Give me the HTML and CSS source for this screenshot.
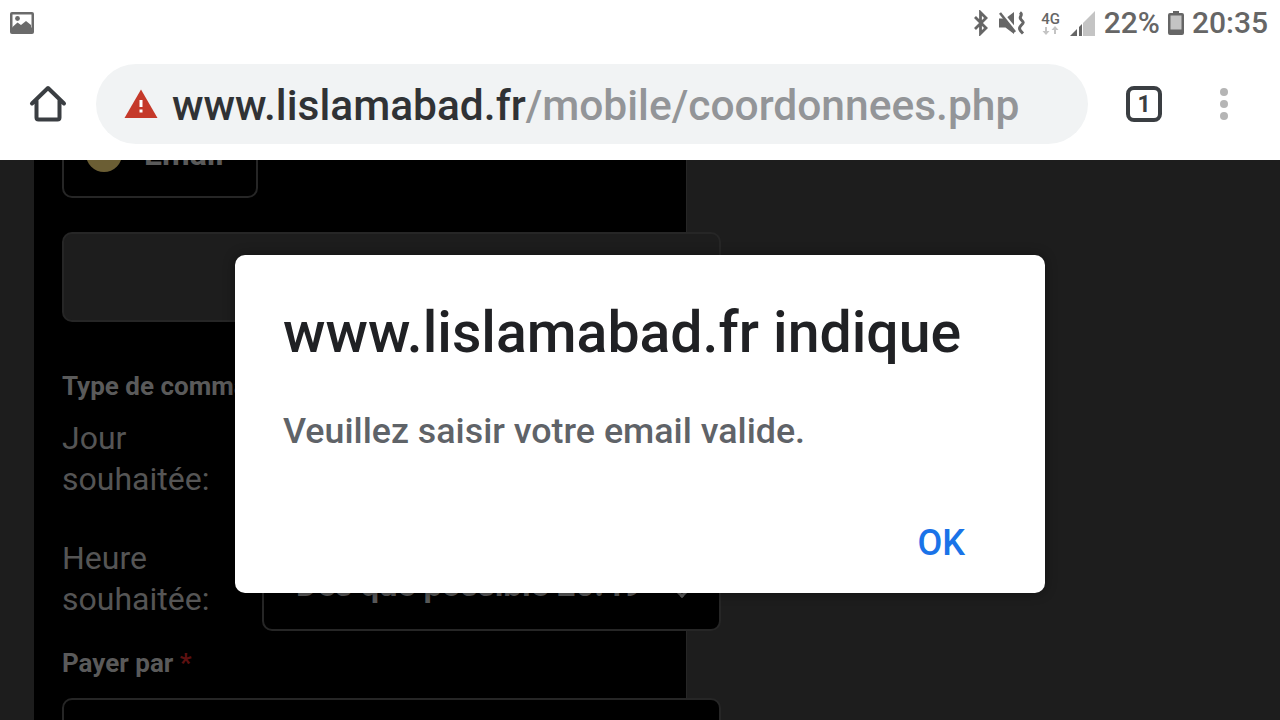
FILE: index.html
```html
<!DOCTYPE html>
<html lang="fr">
<head>
  <meta charset="UTF-8" />
  <title>www.lislamabad.fr</title>
  <link rel="stylesheet" href="styles.css">
</head>
<body>

  <!-- Status bar -->
  <div class="status-bar">
    <svg class="pic-icon" width="24" height="22" viewBox="0 0 24 22">
      <rect x="0" y="0" width="24" height="22" rx="2" fill="#6b6b6b"/>
      <rect x="2.500" y="2.500" width="19" height="13" fill="#fff"/>
      <circle cx="7.500" cy="6.500" r="2.400" fill="#6b6b6b"/>
      <path d="M2.500 15l5-4.500 3.500 2.500 5-4 5 4v6h-18.500z" fill="#6b6b6b"/>
    </svg>
    <div class="status-right">
      <svg class="st-bt" width="18" height="26" viewBox="0 0 18 26">
        <path d="M3 7l11 11-5.500 5.500V2.500L14 8 3 19" fill="none" stroke="#666" stroke-width="2.800"/>
      </svg>
      <svg class="st-mute" width="28" height="24" viewBox="0 0 28 24">
        <path d="M0 7.500h6.500L15 1v22l-8.500-6.500H0z" fill="#666"/>
        <path d="M1 0l17 21" stroke="#fff" stroke-width="3.600"/>
        <path d="M1 2l15 19" stroke="#666" stroke-width="2.600"/>
        <path d="M21 1.500c4 3-2 4 1 7s3 3 0 6-1 5 2 8" fill="none" stroke="#666" stroke-width="3"/>
      </svg>
      <div class="st-net">
        <span>4G</span>
        <svg width="18" height="9" viewBox="0 0 18 9">
          <path d="M4 9L0.500 5H3V1h2v4h2.500zM13 0l3.500 4H14v4h-2V4H9.500z" fill="#c4c4c4"/>
        </svg>
      </div>
      <svg class="st-signal" width="25" height="25" viewBox="0 0 25 25">
        <path d="M0 25l7-7v7z" fill="#666"/>
        <path d="M9 25v-9l3-3v12z" fill="#666"/>
        <path d="M13 25V12L25 0v25z" fill="#c4c4c4"/>
      </svg>
      <span class="st-text st-pct">22%</span>
      <svg class="st-batt" width="16" height="24" viewBox="0 0 16 24">
        <path d="M5 0h6v2h3a2 2 0 0 1 2 2v18a2 2 0 0 1-2 2H2a2 2 0 0 1-2-2V4a2 2 0 0 1 2-2h3z" fill="#666"/>
        <rect x="2.500" y="4.500" width="11" height="14" fill="#c4c4c4"/>
      </svg>
      <span class="st-text">20:35</span>
    </div>
  </div>

  <!-- Browser toolbar -->
  <div class="toolbar">
    <svg class="home" width="38" height="38" viewBox="0 0 38 38">
      <path d="M3 18.500L19 3l16 15.500M7.500 15v17.500a2 2 0 0 0 2 2h19a2 2 0 0 0 2-2V15" fill="none" stroke="#3a3e42" stroke-width="4" stroke-linecap="round" stroke-linejoin="round"/>
    </svg>
    <div class="omnibox">
      <svg class="warn" width="34" height="30" viewBox="0 0 34 30">
        <path d="M17 0.500L33.500 29H0.500z" fill="#c5392a"/>
        <rect x="15.500" y="11" width="3" height="7" fill="#fff"/>
        <rect x="15.500" y="20.500" width="3" height="3" fill="#fff"/>
      </svg>
      <span class="url"><span class="url-host">www.lislamabad.fr</span>/mobile/coordonnees.php</span>
    </div>
    <div class="tab-count">1</div>
    <div class="more"><i></i><i></i><i></i></div>
  </div>

  <!-- Page behind the dialog -->
  <div class="content">
    <div class="panel">
      <div class="email-btn"><span class="email-dot"></span><span class="email-text">Email</span></div>
      <div class="big-field"></div>
      <div class="label">Type de commande</div>
      <div class="row row-jour">
        <div class="row-label">Jour souhaitée:</div>
      </div>
      <div class="row">
        <div class="row-label">Heure souhaitée:</div>
        <div class="select">Dès que possible 20:49<span class="chev"></span></div>
      </div>
      <div class="label label-pay">Payer par <span class="req">*</span></div>
      <div class="pay-field"></div>
    </div>
  </div>

  <!-- Alert -->
  <div class="dialog">
    <h1>www.lislamabad.fr indique</h1>
    <p>Veuillez saisir votre email valide.</p>
    <div class="actions"><button>OK</button></div>
  </div>

</body>
</html>
```

FILE: styles.css
```css
* {
  margin: 0;
  padding: 0;
  box-sizing: border-box;
}

body {
  font-family: 'Roboto', sans-serif;
  width: 1280px;
  height: 720px;
  overflow: hidden;
  background: #1d1d1d;
}

.status-bar {
  height: 48px;
  background: #fff;
  display: flex;
  justify-content: space-between;
  align-items: center;
  padding: 0 12px 2px 10px;
}

.status-right {
  display: flex;
  align-items: center;
}

.st-bt {
  margin-right: 9px;
}

.st-mute {
  margin-right: 14px;
}

.st-net {
  width: 20px;
  display: flex;
  flex-direction: column;
  align-items: center;
  margin-right: 9px;
  font-size: 15px;
  font-weight: 500;
  line-height: 14px;
  color: #666;
}

.st-net svg {
  display: block;
}

.st-signal {
  margin-right: 9px;
}

.st-text {
  font-size: 30px;
  font-weight: 500;
  color: #666;
  line-height: 36px;
}

.st-pct {
  margin-right: 8px;
}

.st-batt {
  margin-right: 8px;
}

.toolbar {
  height: 112px;
  background: #fff;
  display: flex;
  align-items: center;
}

.home {
  margin-left: 29px;
  margin-right: 29px;
}

.omnibox {
  width: 992px;
  height: 80px;
  border-radius: 40px;
  background: #f1f3f4;
  display: flex;
  align-items: center;
  padding-left: 28px;
  margin-right: 38px;
}

.warn {
  margin-right: 14px;
}

.url {
  font-size: 42.500px;
  font-weight: 500;
  color: #939598;
  white-space: nowrap;
  padding-top: 3px;
}

.url-host {
  color: #303235;
}

.tab-count {
  width: 36px;
  height: 36px;
  border: 4px solid #3a3e42;
  border-radius: 8px;
  font-size: 23px;
  font-weight: 700;
  color: #3a3e42;
  display: flex;
  align-items: center;
  justify-content: center;
  margin-right: 58px;
}

.more {
  display: flex;
  flex-direction: column;
  gap: 4px;
}

.more i {
  display: block;
  width: 8px;
  height: 8px;
  border-radius: 50%;
  background: #b5b5b5;
}

.content {
  height: 560px;
  overflow: hidden;
}

.panel {
  display: flow-root;
  width: 653px;
  height: 560px;
  margin-left: 34px;
  background: #000;
  border-right: 1px solid #262626;
  padding-left: 28px;
}

.email-btn {
  width: 196px;
  height: 88px;
  margin-top: -50px;
  border: 2px solid #262626;
  border-radius: 10px;
  display: flex;
  align-items: center;
  color: #5a5a5a;
  font-size: 32px;
  font-weight: 700;
  padding-left: 22px;
}

.email-dot {
  width: 36px;
  height: 36px;
  border-radius: 50%;
  background: #6b5e34;
  margin-right: 22px;
  flex: none;
}

.big-field {
  width: 659px;
  height: 90px;
  margin-top: 34px;
  background: #1d1d1d;
  border: 2px solid #262626;
  border-radius: 10px;
}

.label {
  margin-top: 49px;
  font-size: 26px;
  font-weight: 700;
  line-height: 30px;
  color: #5a5a5a;
}

.row {
  display: flex;
  width: 659px;
}

.row-jour {
  margin-top: 17px;
  height: 120px;
}

.row-label {
  width: 200px;
  font-size: 32px;
  line-height: 41px;
  color: #555;
}

.select {
  width: 459px;
  height: 80px;
  margin-top: 13px;
  background: #000;
  border: 2px solid #262626;
  border-radius: 10px;
  display: flex;
  align-items: center;
  justify-content: space-between;
  padding: 0 32px 14px;
  font-size: 33px;
  font-weight: 700;
  color: #5a5a5a;
  white-space: nowrap;
}

.chev {
  width: 10px;
  height: 10px;
  margin-top: 14px;
  margin-right: 0;
  border-right: 3px solid #5a5a5a;
  border-bottom: 3px solid #5a5a5a;
  transform: rotate(45deg);
}

.label-pay {
  margin-top: 17px;
}

.req {
  color: #5c1010;
}

.pay-field {
  width: 659px;
  height: 60px;
  margin-top: 20px;
  border: 2px solid #262626;
  border-radius: 10px;
  background: #000;
}

.dialog {
  position: absolute;
  left: 235px;
  top: 255px;
  width: 810px;
  height: 338px;
  background: #fff;
  border-radius: 10px;
  box-shadow: 0 0 12px rgba(0, 0, 0, 0.4);
  padding: 47px 48px 0;
}

.dialog h1 {
  font-size: 57.200px;
  font-weight: 500;
  line-height: 62px;
  color: #202124;
  white-space: nowrap;
}

.dialog p {
  margin-top: 46px;
  font-size: 35.800px;
  font-weight: 500;
  line-height: 42px;
  color: #5f6368;
}

.actions {
  display: flex;
  justify-content: flex-end;
  margin-top: 70px;
  margin-right: 32px;
}

.actions button {
  background: none;
  border: none;
  font-family: 'Roboto', sans-serif;
  font-size: 36px;
  font-weight: 500;
  line-height: 42px;
  color: #1a73e8;
}
```
